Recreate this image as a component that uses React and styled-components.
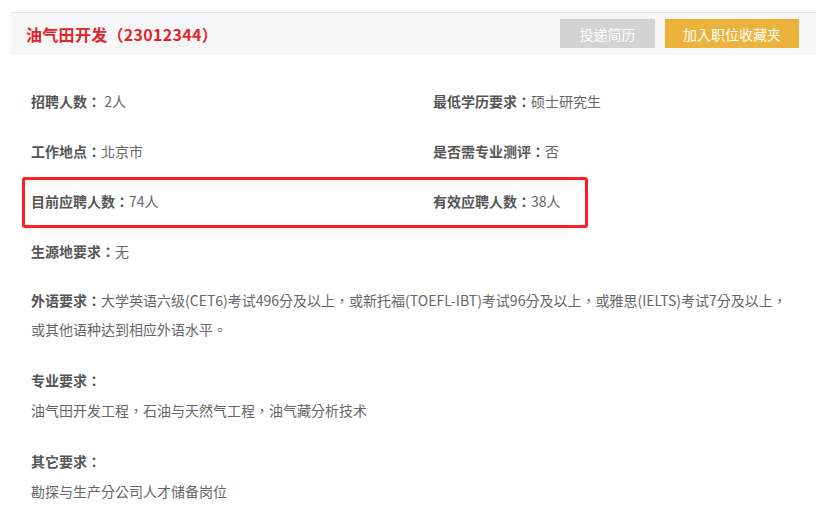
import React from 'react';
import styled, { createGlobalStyle } from 'styled-components';

const GlobalStyle = createGlobalStyle`
  html, body {
    margin: 0;
    padding: 0;
    background: #fff;
  }
  body {
    font-family: "Microsoft YaHei", "Noto Sans CJK TC", "Noto Sans CJK SC", sans-serif;
  }
`;

const job = {
  title: '油气田开发（23012344）',
  facts: [
    ['招聘人数：', ' 2人', '最低学历要求：', '硕士研究生'],
    ['工作地点：', '北京市', '是否需专业测评：', '否'],
    ['目前应聘人数：', '74人', '有效应聘人数：', '38人'],
    ['生源地要求：', '无'],
  ],
  language: [
    '大学英语六级(CET6)考试496分及以上，或新托福(TOEFL-IBT)考试96分及以上，或雅思(IELTS)考试7分及以上，',
    '或其他语种达到相应外语水平。',
  ],
  major: '油气田开发工程，石油与天然气工程，油气藏分析技术',
  other: '勘探与生产分公司人才储备岗位',
};

const App = () => {
  return (
    <Page>
      <GlobalStyle />
      <Header>
        <Title>{job.title}</Title>
        <Actions>
          <Button $bg="#d3d3d3" $w={95}>投递简历</Button>
          <Button $bg="#ebb33c" $w={134}>加入职位收藏夹</Button>
        </Actions>
      </Header>
      <Body>
        {job.facts.map((row, i) => (
          <FactRow key={i}>
            {i === 2 && <Highlight />}
            <Fact>
              <Label>{row[0]}</Label>
              {row[1]}
            </Fact>
            {row[2] && (
              <Fact>
                <Label>{row[2]}</Label>
                {row[3]}
              </Fact>
            )}
          </FactRow>
        ))}
        <Blocks>
          <Paragraph $lh={29}>
            <Label>外语要求：</Label>
            {job.language[0]}
            <br />
            {job.language[1]}
          </Paragraph>
          <Paragraph $lh={30}>
            <Label>专业要求：</Label>
            <br />
            {job.major}
          </Paragraph>
          <Paragraph $lh={30}>
            <Label>其它要求：</Label>
            <br />
            {job.other}
          </Paragraph>
        </Blocks>
      </Body>
    </Page>
  );
};

const Page = styled.div`
  width: 816px;
  padding-top: 12px;
  color: #666;
  font-size: 14px;
`;

const Header = styled.div`
  margin-left: 11px;
  height: 42px;
  background: #f7f7f7;
  border-top: 1px solid #e6e6e6;
  display: flex;
  align-items: center;
  justify-content: space-between;
  padding: 0 17px 0 15px;
`;

const Title = styled.h2`
  margin: 0;
  font-size: 16px;
  font-weight: bold;
  color: #e3242b;
  letter-spacing: 0.3px;
`;

const Actions = styled.div`
  display: flex;
  gap: 10px;
  margin-top: -1px;
`;

const Button = styled.button`
  width: ${(p) => p.$w}px;
  height: 29px;
  border: none;
  background: ${(p) => p.$bg};
  color: #fff;
  font-family: inherit;
  font-size: 14px;
  padding: 0;
  cursor: pointer;
`;

const Body = styled.div`
  padding: 21px 0 0 31px;
`;

const FactRow = styled.div`
  position: relative;
  display: grid;
  grid-template-columns: 402px 1fr;
  height: 50px;
  align-items: center;
`;

const Highlight = styled.div`
  position: absolute;
  left: -9px;
  top: 1px;
  width: 560px;
  height: 45px;
  border: 3px solid #fe1f1c;
  border-radius: 3px;
  pointer-events: none;
`;

const Fact = styled.div`
  line-height: 20px;
`;

const Label = styled.span`
  font-weight: bold;
  color: #555;
`;

const Blocks = styled.div`
  display: flex;
  flex-direction: column;
  gap: 21px;
  padding-top: 10px;
  padding-right: 10px;
`;

const Paragraph = styled.p`
  margin: 0;
  line-height: ${(p) => p.$lh}px;
  white-space: nowrap;
`;

export default App;
